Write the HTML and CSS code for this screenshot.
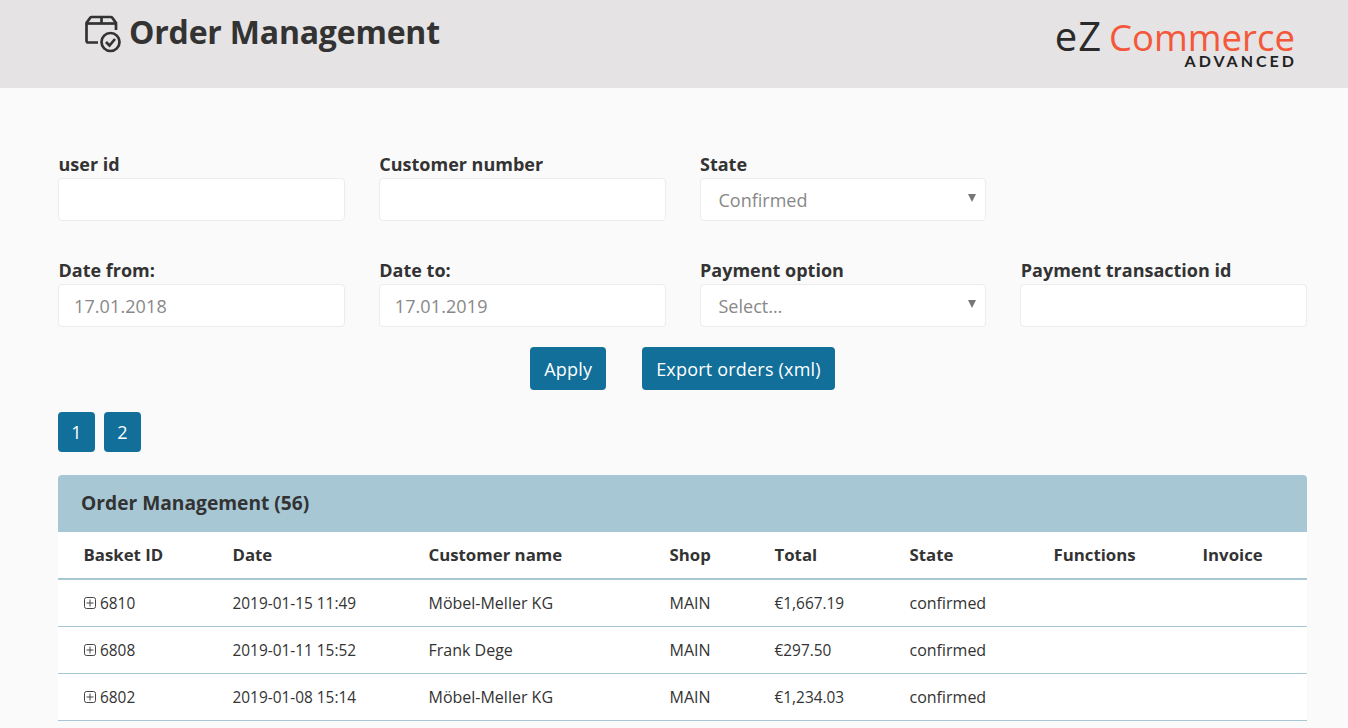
FILE: index.html
```html
<!DOCTYPE html>
<html lang="en">
<head>
<meta charset="utf-8">
<title>Order Management</title>
<link rel="stylesheet" href="styles.css">
</head>
<body>
<header class="topbar">
  <div class="title">
    <svg class="title-icon" width="38" height="40" viewBox="0 0 38 40" fill="none" stroke="#333" stroke-width="2.7">
      <path d="M14 29.500H4.500a2 2 0 0 1-2-2V10l3.500-5a2 2 0 0 1 1.500-1H27a2 2 0 0 1 1.500 1l3.500 5v7"/>
      <path d="M2.500 10.500H32"/>
      <path d="M17.500 4v6.500"/>
      <circle cx="26.500" cy="29" r="9"/>
      <path d="M22 29l3.500 3.500 5.500-6.500"/>
    </svg>
    <h1>Order Management</h1>
  </div>
  <div class="logo">
    <div class="logo-main"><span class="logo-ez">eZ</span><span class="logo-com">Commerce</span></div>
    <div class="logo-sub">ADVANCED</div>
  </div>
</header>
<main class="content">
  <form class="filters">
    <div class="field"><label>user id</label><div class="input"></div></div>
    <div class="field"><label>Customer number</label><div class="input"></div></div>
    <div class="field"><label>State</label><div class="input select">Confirmed</div></div>
    <div class="field"></div>
    <div class="field"><label>Date from:</label><div class="input date">17.01.2018</div></div>
    <div class="field"><label>Date to:</label><div class="input date">17.01.2019</div></div>
    <div class="field"><label>Payment option</label><div class="input select">Select...</div></div>
    <div class="field"><label>Payment transaction id</label><div class="input"></div></div>
  </form>
  <div class="actions">
    <button class="btn">Apply</button>
    <button class="btn">Export orders (xml)</button>
  </div>
  <div class="pager">
    <button class="btn page">1</button>
    <button class="btn page">2</button>
  </div>
  <section class="panel">
    <h2 class="panel-head">Order Management (56)</h2>
    <table class="orders">
      <thead>
        <tr><th class="c1">Basket ID</th><th class="c2">Date</th><th class="c3">Customer name</th><th class="c4">Shop</th><th class="c5">Total</th><th class="c6">State</th><th class="c7">Functions</th><th class="c8">Invoice</th></tr>
      </thead>
      <tbody>
        <tr><td class="num"><svg class="plus" width="12" height="12" viewBox="0 0 12 12"><rect x=".5" y=".5" width="11" height="11" rx="2"/><path d="M2.500 6h7M6 2.500v7"/></svg> 6810</td><td class="num">2019-01-15 11:49</td><td>Möbel-Meller KG</td><td>MAIN</td><td class="num">€1,667.19</td><td>confirmed</td><td></td><td></td></tr>
        <tr><td class="num"><svg class="plus" width="12" height="12" viewBox="0 0 12 12"><rect x=".5" y=".5" width="11" height="11" rx="2"/><path d="M2.500 6h7M6 2.500v7"/></svg> 6808</td><td class="num">2019-01-11 15:52</td><td>Frank Dege</td><td>MAIN</td><td class="num">€297.50</td><td>confirmed</td><td></td><td></td></tr>
        <tr><td class="num"><svg class="plus" width="12" height="12" viewBox="0 0 12 12"><rect x=".5" y=".5" width="11" height="11" rx="2"/><path d="M2.500 6h7M6 2.500v7"/></svg> 6802</td><td class="num">2019-01-08 15:14</td><td>Möbel-Meller KG</td><td>MAIN</td><td class="num">€1,234.03</td><td>confirmed</td><td></td><td></td></tr>
      </tbody>
    </table>
  </section>
</main>
</body>
</html>
```
FILE: styles.css
```css
* { box-sizing: border-box; }
html, body { margin: 0; height: 728px; overflow: hidden; }
body { background: #fafafa; color: #333; font-family: "Open Sans", sans-serif; font-size: 16px; }
.topbar { height: 88px; background: #e5e3e4; display: flex; justify-content: space-between; padding: 0 53px 0 84px; }
.title { display: flex; align-items: flex-start; gap: 7px; padding-top: 13px; }
.title-icon { flex: none; }
h1 { margin: 0; font-size: 32px; line-height: 37px; font-weight: 700; letter-spacing: -0.2px; color: #333; }
.logo { padding-top: 18px; width: 260px; display: flex; flex-direction: column; align-items: flex-end; }
.logo-main { font-family: "Open Sans", sans-serif; font-size: 36.5px; line-height: 35px; white-space: nowrap; font-weight: 400; display: flex; align-items: baseline; gap: 7px; height: 35px; }
.logo-ez { color: #2a2a2a; letter-spacing: 1px; font-size: 40px; }
.logo-com { color: #f4583a; }
.logo-sub { font-family: "Lato", sans-serif; font-size: 16px; font-weight: 700; line-height: 16px; letter-spacing: 3px; margin-right: -2px; color: #222; }
.content { padding: 65px 41px 0 58px; }
.filters { display: grid; grid-template-columns: repeat(4, 1fr); column-gap: 34px; row-gap: 19px; }
.field { min-height: 87px; }
.field label { display: block; font-weight: 700; font-size: 18px; line-height: 23px; margin-bottom: 2px; margin-left: 0.5px; }
.input { height: 43px; background: #fff; border: 1px solid #ececec; border-radius: 4px; padding: 0 15px; line-height: 42px; font-size: 18px; color: #888; position: relative; }
.select { padding-left: 18px; }
.select::after { content: ""; position: absolute; right: 9px; top: 15px; border: 4px solid transparent; border-top: 8px solid #777; border-bottom: 0; }
.date { letter-spacing: 0.1px; }
.actions { display: flex; justify-content: center; gap: 36px; margin-top: 1px; }
.btn { background: #116f9a; color: #fff; border: 0; border-radius: 4px; height: 43px; padding: 0 14px; font: 500 18px "Open Sans", sans-serif; letter-spacing: 0.2px; }
.pager { display: flex; gap: 9px; margin-top: 22px; }
.page { width: 37px; padding: 0; height: 40px; }
.panel { margin-top: 23px; background: #fff; border-radius: 4px 4px 0 0; }
.panel-head { margin: 0; height: 57px; background: #a7c7d5; border-radius: 4px 4px 0 0; padding: 0 23px; font-size: 19.2px; font-weight: 700; line-height: 56px; }
.orders { width: 100%; border-collapse: collapse; table-layout: fixed; font-size: 16px; }
.orders th { text-align: left; font-weight: 700; height: 47px; border-bottom: 2px solid #a7c7d5; padding: 0 0 2px 25.5px; font-size: 16.8px; }
.orders td { height: 47px; border-bottom: 1px solid #a7c7d5; padding: 0 0 0 25.5px; color: #333; white-space: nowrap; }
.orders td.num { font-size: 15.4px; padding-top: 2px; }
.c1 { width: 149px; } .c2 { width: 196px; } .c3 { width: 241px; } .c4 { width: 105px; } .c5 { width: 135px; } .c6 { width: 144px; } .c7 { width: 149px; } .c8 { width: auto; }
.plus { fill: none; stroke: #444; stroke-width: 1; vertical-align: 0; margin-left: 0.5px; }
```
